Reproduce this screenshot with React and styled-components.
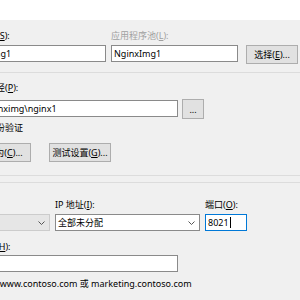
import React from "react";
import styled, { createGlobalStyle } from "styled-components";

const GlobalStyle = createGlobalStyle`
  html, body {
    margin: 0;
    padding: 0;
    background: #f0f0f0;
  }
  body {
    width: 300px;
    height: 300px;
    overflow: hidden;
    font-family: "Noto Sans", "Noto Sans CJK SC", sans-serif;
    font-size: 9px;
    color: #000;
  }
`;

const TopStrip = styled.div`
  height: 20px;
  background: #fff;
`;

const Dialog = styled.div`
  margin-left: -39px;
  width: 380px;
`;

const SiteGrid = styled.div`
  display: grid;
  grid-template-columns: 145px 127px 60px;
  column-gap: 5px;
  row-gap: 3px;
  padding-top: 10px;
  align-items: start;
`;

const Label = styled.div`
  height: 12px;
  line-height: 12px;
  white-space: nowrap;
  color: ${(p) => (p.$disabled ? "#a0a0a0" : "#000")};
  margin-top: ${(p) => p.$mt || 0}px;
  margin-left: ${(p) => p.$ml || 0}px;
`;

const TextBox = styled.div`
  box-sizing: border-box;
  height: 17px;
  width: ${(p) => (p.$w ? `${p.$w}px` : "auto")};
  border: 1px solid ${(p) => (p.$focus ? "#0078d7" : "#8a8a8a")};
  background: #fff;
  padding-left: 2px;
  line-height: 15px;
  white-space: nowrap;
  overflow: hidden;
  margin-top: ${(p) => p.$mt || 0}px;
`;

const Button = styled.div`
  box-sizing: border-box;
  width: ${(p) => p.$w}px;
  height: ${(p) => p.$h || 19}px;
  border: 1px solid #adadad;
  background: #e1e1e1;
  display: flex;
  align-items: center;
  justify-content: center;
  white-space: nowrap;
  margin-left: ${(p) => p.$ml || 0}px;
`;

const Group = styled.div`
  border-top: 1px solid #dcdcdc;
  border-bottom: 1px solid #dcdcdc;
  margin-top: ${(p) => p.$mt}px;
  padding: ${(p) => p.$pt}px 0 ${(p) => p.$pb}px 8px;
`;

const PathRow = styled.div`
  display: flex;
  align-items: flex-start;
  gap: 4px;
  margin-top: 5px;
`;

const ButtonRow = styled.div`
  display: flex;
  gap: 18px;
  margin-top: 9px;
`;

const BindGrid = styled.div`
  display: grid;
  grid-template-columns: 81px 145px 42px;
  column-gap: 5px;
  row-gap: 3px;
`;

const Select = styled.div`
  box-sizing: border-box;
  height: 17px;
  border: 1px solid ${(p) => (p.$disabled ? "#cccccc" : "#8a8a8a")};
  background: ${(p) => (p.$disabled ? "#e6e6e6" : "#fff")};
  display: flex;
  align-items: center;
  justify-content: space-between;
  padding: 0 4px 0 2px;
  white-space: nowrap;
`;

const Caret = styled.span`
  display: inline-block;
  width: 1px;
  height: 11px;
  background: #000;
  vertical-align: -2px;
  margin-left: 1px;
`;

const Chevron = () => (
  <svg width="7" height="4" viewBox="0 0 7 4">
    <path d="M0.5 0.5 L3.5 3.5 L6.5 0.5" fill="none" stroke="#555" strokeWidth="1" />
  </svg>
);

export default function App() {
  return (
    <>
      <GlobalStyle />
      <TopStrip />
      <Dialog>
        <SiteGrid>
          <Label>网站名称(<u>S</u>):</Label>
          <Label $disabled>应用程序池(<u>L</u>):</Label>
          <div />
          <TextBox>NginxImg1</TextBox>
          <TextBox>NginxImg1</TextBox>
          <Button $w={52} $ml={3}>选择(<u>E</u>)...</Button>
        </SiteGrid>

        <Group $mt={8} $pt={9} $pb={13}>
          <Label>物理路径(<u>P</u>):</Label>
          <PathRow>
            <TextBox $w={209} $mt={1}>D:\nginximg\nginx1</TextBox>
            <Button $w={22} $h={20}>...</Button>
          </PathRow>
          <Label $mt={3}>传递身份验证</Label>
          <ButtonRow>
            <Button $w={62}>连接为(<u>C</u>)...</Button>
            <Button $w={62}>测试设置(<u>G</u>)...</Button>
          </ButtonRow>
        </Group>

        <Group $mt={6} $pt={16} $pb={20}>
          <BindGrid>
            <Label>类型(<u>T</u>):</Label>
            <Label>IP 地址(<u>I</u>):</Label>
            <Label>端口(<u>O</u>):</Label>
            <Select $disabled>
              <span>http</span>
              <Chevron />
            </Select>
            <Select>
              <span>全部未分配</span>
              <Chevron />
            </Select>
            <TextBox $focus>
              8021<Caret />
            </TextBox>
          </BindGrid>
          <Label $mt={10}>主机名(<u>H</u>):</Label>
          <TextBox $w={209} $mt={2} />
          <Label $mt={6} $ml={8}>示例: www.contoso.com 或 marketing.contoso.com</Label>
        </Group>
      </Dialog>
    </>
  );
}
